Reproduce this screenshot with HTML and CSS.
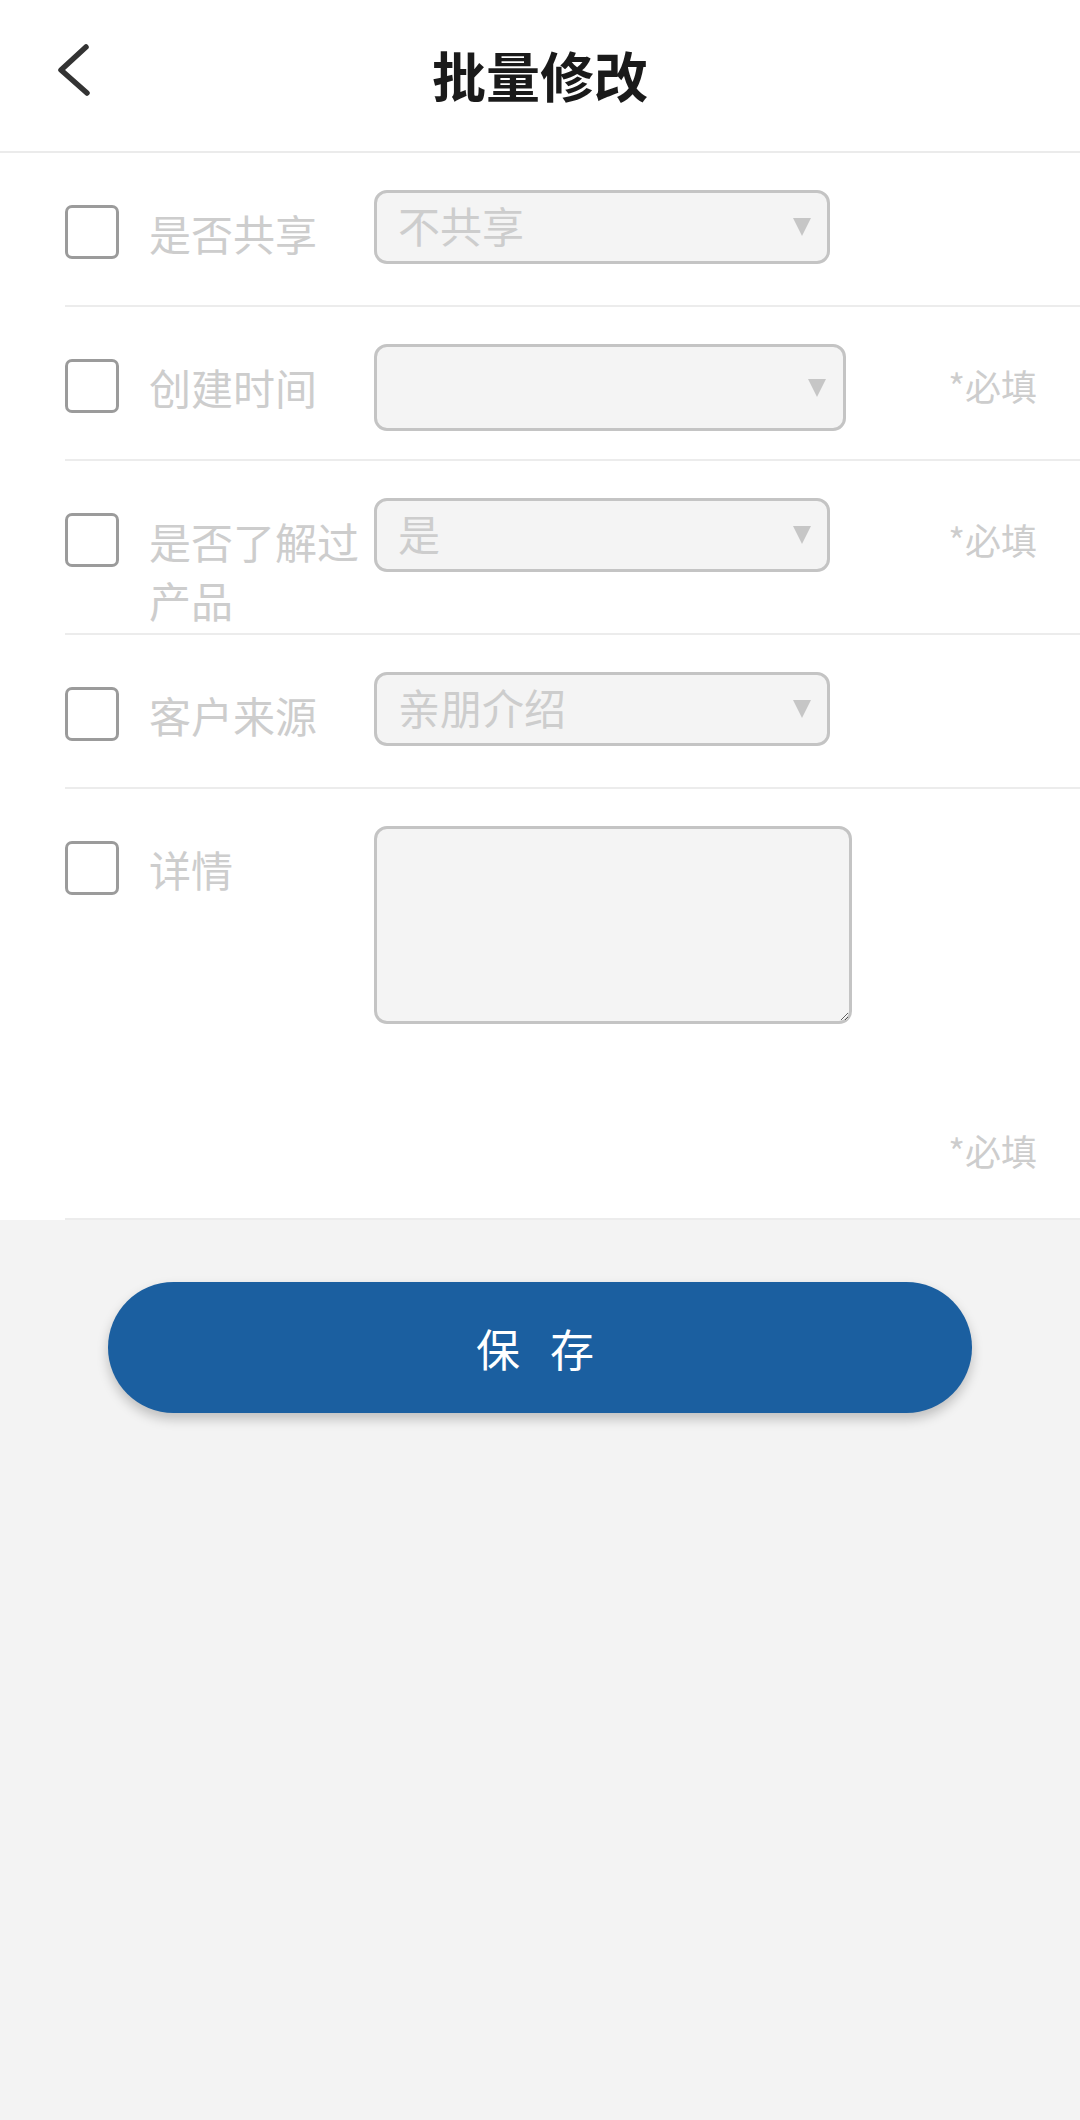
FILE: index.html
```html
<!DOCTYPE html>
<html lang="zh-CN">
<head>
  <meta charset="UTF-8">
  <meta name="viewport" content="width=device-width, initial-scale=1.0">
  <title>批量修改</title>
  <link rel="stylesheet" href="styles.css">
</head>
<body>
  <header class="topbar">
    <svg class="back" viewBox="0 0 40 60" width="40" height="60">
      <path d="M31 7 L6 30 L32 53" fill="none" stroke="#333" stroke-width="5.5" stroke-linecap="round" stroke-linejoin="round"/>
    </svg>
    <h1 class="title">批量修改</h1>
    <span></span>
  </header>

  <main class="form">
    <div class="row">
      <span class="check"></span>
      <label class="label">是否共享</label>
      <div class="select">
        <span class="value">不共享</span>
        <span class="caret"></span>
      </div>
    </div>

    <div class="row">
      <span class="check"></span>
      <label class="label">创建时间</label>
      <div class="select select-wide">
        <span class="value"></span>
        <span class="caret"></span>
      </div>
      <span class="req">*必填</span>
    </div>

    <div class="row">
      <span class="check"></span>
      <label class="label">是否了解过产品</label>
      <div class="select">
        <span class="value">是</span>
        <span class="caret"></span>
      </div>
      <span class="req">*必填</span>
    </div>

    <div class="row">
      <span class="check"></span>
      <label class="label">客户来源</label>
      <div class="select">
        <span class="value">亲朋介绍</span>
        <span class="caret"></span>
      </div>
    </div>

    <div class="row row-wrap">
      <span class="check"></span>
      <label class="label">详情</label>
      <textarea class="detail"></textarea>
      <span class="req req-below">*必填</span>
    </div>
  </main>

  <div class="actions">
    <button class="save">保 存</button>
  </div>
</body>
</html>
```

FILE: styles.css
```css
html, body {
  margin: 0;
  padding: 0;
}

body {
  font-family: "Noto Sans CJK SC", "Noto Sans", sans-serif;
  background: #f3f3f3;
  min-height: 2120px;
  color: #333;
}

.topbar {
  display: grid;
  grid-template-columns: 1fr auto 1fr;
  align-items: center;
  height: 151px;
  background: #fff;
  border-bottom: 2px solid #ebebeb;
}

.back {
  align-self: start;
  margin: 40px 0 0 55px;
}

.title {
  margin: 0;
  font-size: 54px;
  font-weight: bold;
  color: #1a1a1a;
  line-height: 1;
  padding-bottom: 2px;
}

.form {
  background: #fff;
}

.row {
  display: flex;
  align-items: flex-start;
  margin-left: 65px;
  padding: 37px 43px 4px 0;
  min-height: 111px;
  border-bottom: 2px solid #ececec;
}

.check {
  flex: none;
  width: 54px;
  height: 54px;
  box-sizing: border-box;
  border: 3px solid #9b9b9b;
  border-radius: 7px;
  background: #fff;
  margin-top: 15px;
}

.label {
  flex: none;
  width: 225px;
  margin: 13px 0 0 30px;
  font-size: 42px;
  line-height: 59px;
  color: #cdcdcd;
}

.select {
  flex: none;
  display: flex;
  align-items: center;
  justify-content: space-between;
  width: 456px;
  height: 74px;
  box-sizing: border-box;
  padding: 0 16px 0 21px;
  border: 3px solid #c4c4c4;
  border-radius: 13px;
  background: #f4f4f4;
}

.select-wide {
  width: 472px;
  height: 87px;
  padding-right: 17px;
}

.value {
  font-size: 42px;
  line-height: 1;
  color: #cdcdcd;
  padding-bottom: 4px;
}

.caret {
  width: 0;
  height: 0;
  border-left: 9px solid transparent;
  border-right: 9px solid transparent;
  border-top: 18px solid #c6c6c6;
}

.req {
  margin: 12px 0 0 auto;
  font-size: 36px;
  line-height: 59px;
  color: #cdcdcd;
}

.row-wrap {
  flex-wrap: wrap;
}

.detail {
  flex: none;
  width: 478px;
  height: 198px;
  box-sizing: border-box;
  margin: 0;
  border: 3px solid #c4c4c4;
  border-radius: 13px;
  background: #f4f4f4;
  font-family: inherit;
  font-size: 42px;
}

.req-below {
  flex-basis: 100%;
  text-align: right;
  margin: 97px 0 34px;
}

.actions {
  padding: 62px 108px 0;
}

.save {
  display: block;
  width: 100%;
  height: 131px;
  padding: 0 10px 0 0;
  border: none;
  border-radius: 66px;
  background: #1b5fa0;
  color: #fff;
  font-family: inherit;
  font-size: 44px;
  word-spacing: 20px;
  box-shadow: 0 6px 12px rgba(0, 0, 0, 0.22);
  cursor: pointer;
}
```
